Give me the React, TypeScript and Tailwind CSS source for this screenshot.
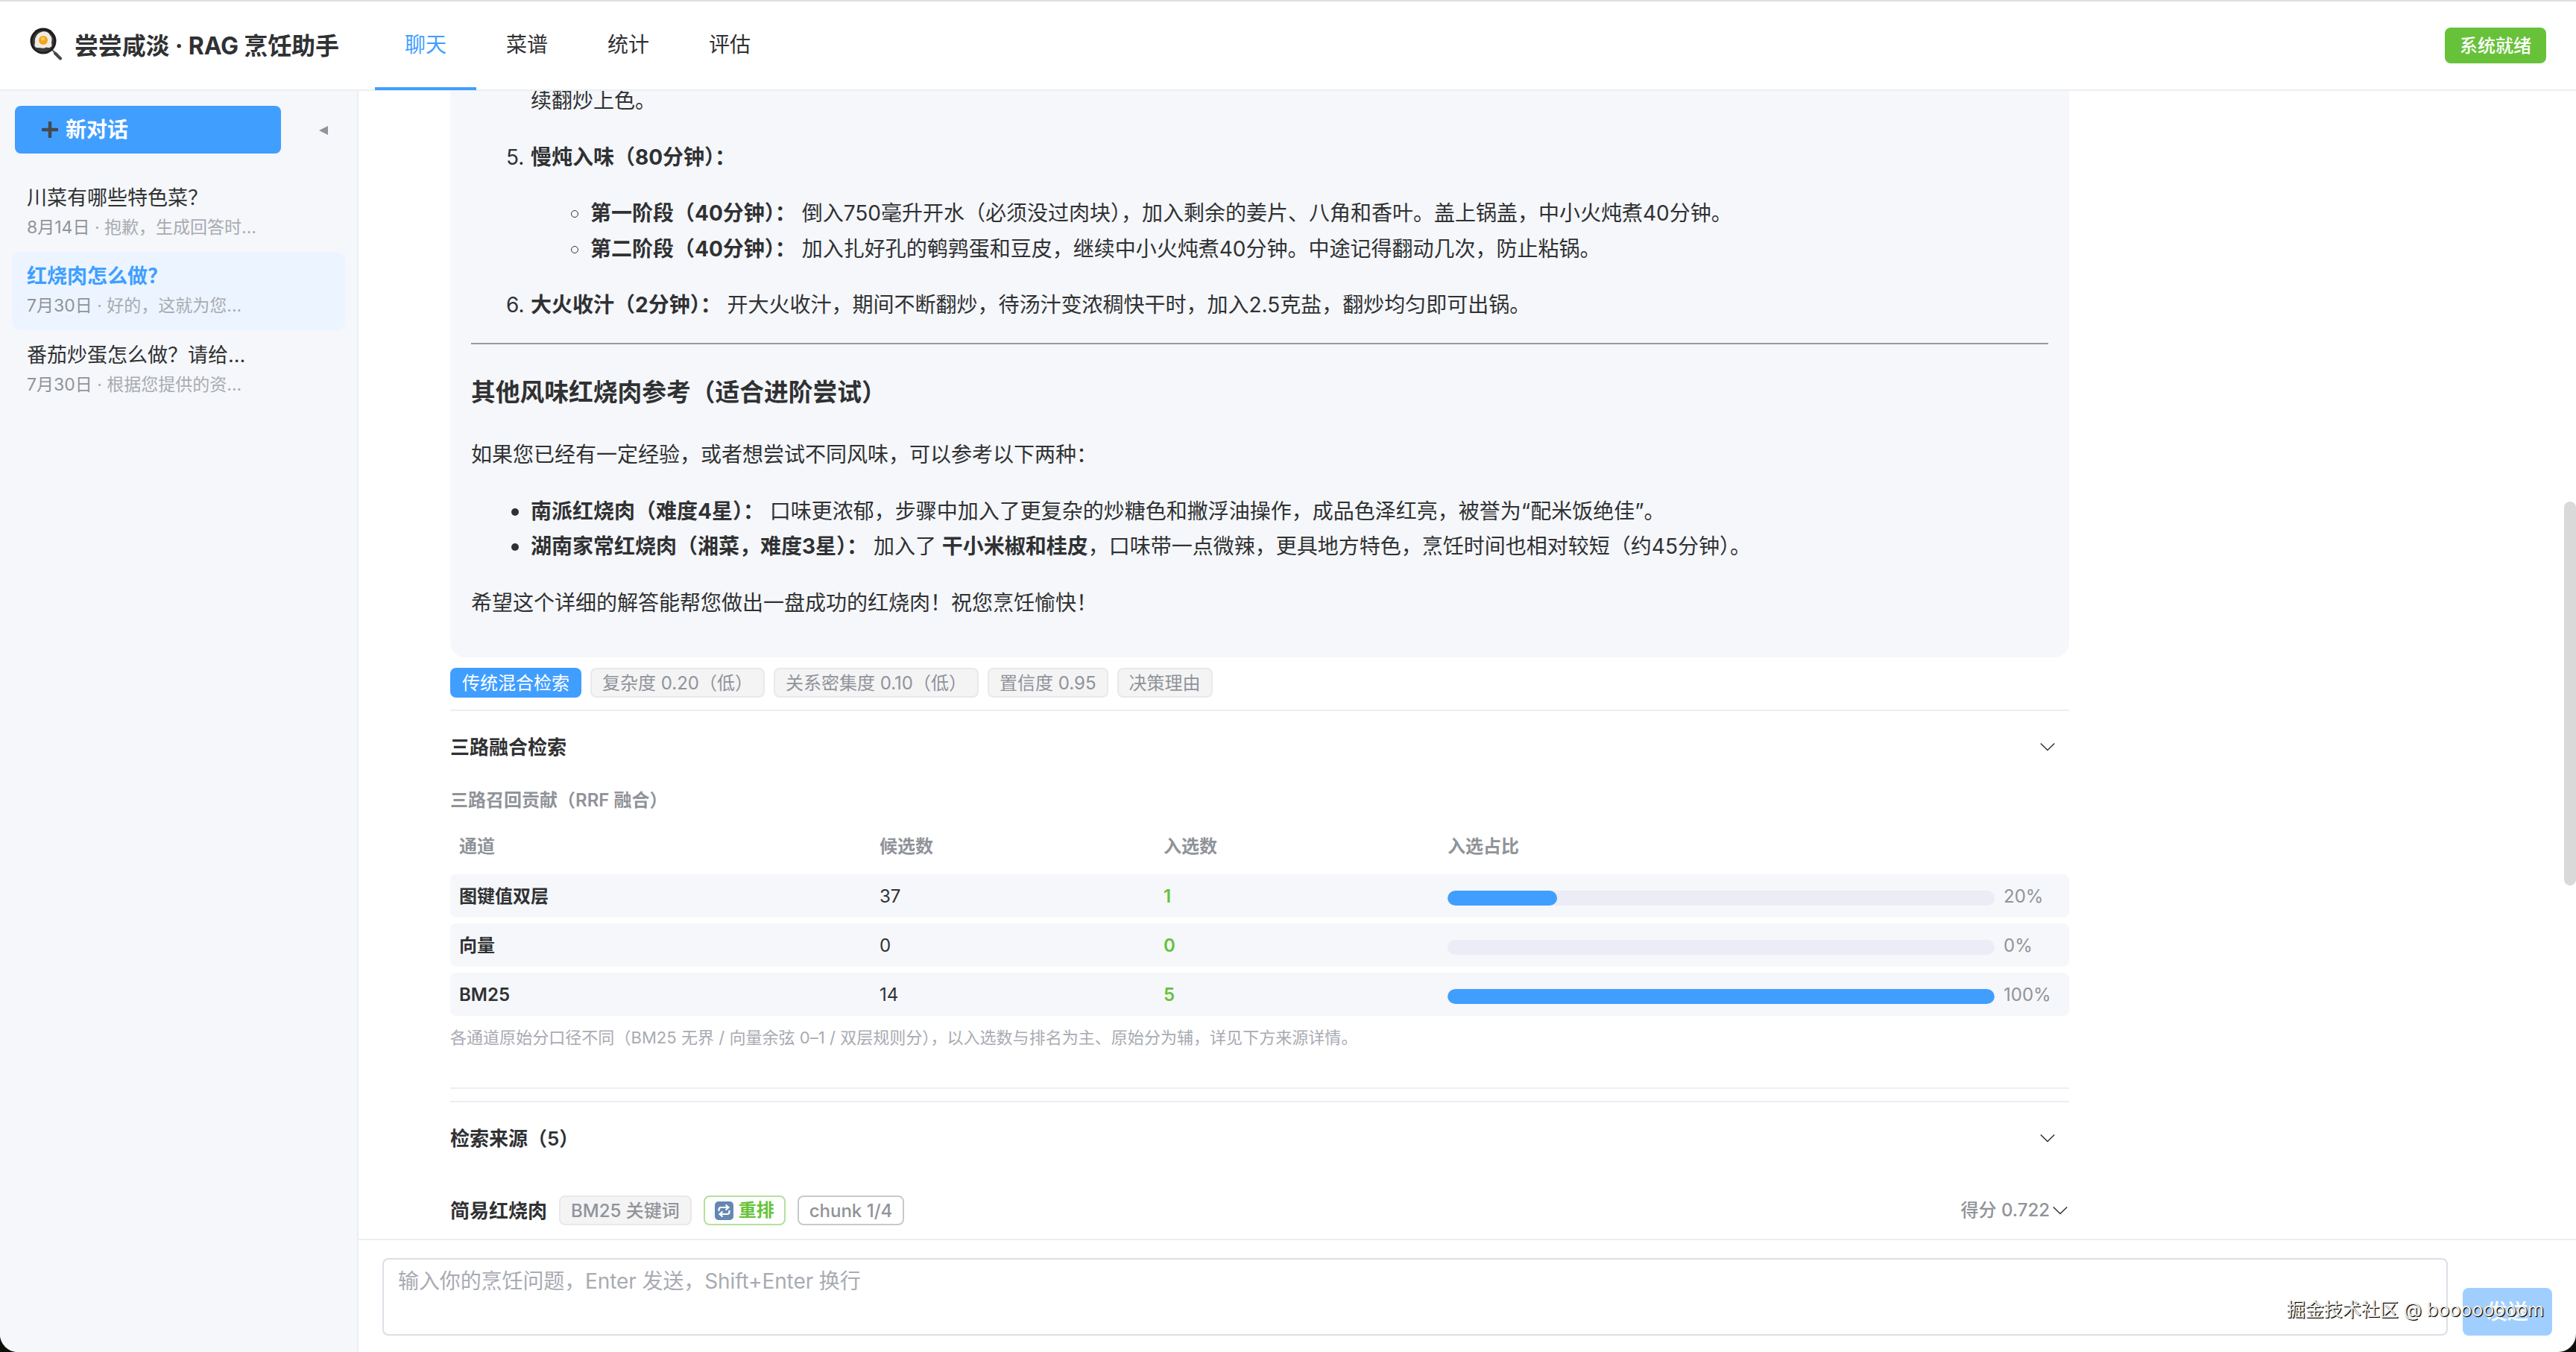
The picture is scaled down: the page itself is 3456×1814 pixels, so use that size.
import React from 'react';

interface Conversation {
    id: number;
    title: string;
    date: string;
    preview: string;
}

interface Channel {
    name: string;
    candidates: number;
    selected: number;
    percent: number;
}

const navItems = ['聊天', '菜谱', '统计', '评估'];

const conversations: Conversation[] = [
    { id: 1, title: '川菜有哪些特色菜？', date: '8月14日', preview: '抱歉，生成回答时...' },
    { id: 2, title: '红烧肉怎么做？', date: '7月30日', preview: '好的，这就为您...' },
    { id: 3, title: '番茄炒蛋怎么做？请给...', date: '7月30日', preview: '根据您提供的资...' },
];

const channels: Channel[] = [
    { name: '图键值双层', candidates: 37, selected: 1, percent: 20 },
    { name: '向量', candidates: 0, selected: 0, percent: 0 },
    { name: 'BM25', candidates: 14, selected: 5, percent: 100 },
];

const routeTags = ['复杂度 0.20（低）', '关系密集度 0.10（低）', '置信度 0.95', '决策理由'];

const PanIcon = () => (
    <svg className="-mt-[5px] h-[44px] w-[44px] shrink-0" viewBox="0 0 44 44">
        <path d="M30 30 L36 36" stroke="#77726e" strokeWidth="2.5" />
        <path d="M34 34.5 L41 41.5" stroke="#4a4644" strokeWidth="4" strokeLinecap="round" />
        <circle cx="18" cy="18" r="17.5" fill="#1d1c1c" />
        <circle cx="18" cy="18.5" r="14.5" fill="#3b3a38" />
        <path d="M13 7 C18 4 25 5 27 10 C31 14 29 18 29 21 C31 26 27 28 22 26.5 C18 29 14 26.5 10 27 C6 27 6 23 7 20 C6 15 9 9 13 7Z" fill="#f0ece4" />
        <circle cx="18" cy="17" r="6" fill="#f5a31c" />
        <circle cx="17.5" cy="15" r="2.5" fill="#fbcf45" />
    </svg>
);

const Chevron = () => (
    <svg className="h-[12px] w-[20px] shrink-0" viewBox="0 0 20 12" fill="none">
        <path d="M0.8 1.5 L10 10.5 L19.2 1.5" stroke="#303133" strokeWidth="1.5" />
    </svg>
);

const Header = () => (
    <header className="flex h-[122px] shrink-0 items-stretch border-t-2 border-b-2 border-t-[#dedede] border-b-[#ebeef2] bg-white pr-10 pl-10">
        <div className="flex w-[463px] items-center">
            <PanIcon />
            <h1 className="mt-[2px] ml-[16px] text-[32px] leading-none font-bold tracking-[-0.15px] whitespace-nowrap">尝尝咸淡 · RAG 烹饪助手</h1>
        </div>
        <nav className="-mb-px flex">
            {navItems.map((item, i) => (
                <div
                    key={item}
                    className={`flex w-[136px] items-center justify-center border-b-4 ${i === 0 ? 'border-[#409eff] text-[#409eff]' : 'border-transparent'}`}
                >
                    {item}
                </div>
            ))}
        </nav>
        <span className="mt-[35px] ml-auto flex h-12 w-[136px] items-center justify-center rounded-lg bg-[#67c23a] pt-px text-[24px] font-medium text-white">系统就绪</span>
    </header>
);

const Sidebar = () => (
    <aside className="flex w-[481px] shrink-0 flex-col border-r-2 border-[#ebeef2] bg-[#f5f7fa]">
        <div className="mt-5 flex items-center pl-5">
            <button className="flex h-16 w-[357px] items-center rounded-lg bg-[#409eff] pl-9 font-bold text-white">
                <svg className="mr-[10px] h-[22px] w-[22px]" viewBox="0 0 22 22">
                    <path d="M11 1.5V20.5M1.5 11H20.5" stroke="#45494e" strokeWidth="4.5" strokeLinecap="round" />
                </svg>
                新对话
            </button>
            <svg className="mt-[2px] ml-[51px] h-[12px] w-[12px]" viewBox="0 0 12 12">
                <path d="M12 0V12L0 6Z" fill="#909399" />
            </svg>
        </div>
        <ul className="mt-[26px] px-4">
            {conversations.map(c => (
                <li key={c.id} className={`flex h-[105.5px] flex-col justify-center rounded-xl pl-5 ${c.id === 2 ? 'bg-[#ecf5ff]' : ''}`}>
                    <div className={`pt-px text-[27px] leading-[40px] ${c.id === 2 ? 'font-semibold text-[#409eff]' : ''}`}>{c.title}</div>
                    <div className="text-[23px] leading-[39px] text-[#a8abb2]">
                        <span className="text-[#909399]">{c.date}</span> · {c.preview}
                    </div>
                </li>
            ))}
        </ul>
    </aside>
);

const Answer = () => (
    <div className="rounded-b-[20px] bg-[#f5f7fa] px-7 pb-[22px] leading-[47.6px]">
        <div className="pl-[80px]">
            <p className="-mt-[10px]">续翻炒上色。</p>
            <div className="relative mt-[28px]">
                <span className="absolute -left-[33px]">5.</span>
                <b>慢炖入味（80分钟）：</b>
            </div>
            <ul className="mt-[28px] pl-20">
                <li className="relative">
                    <i className="absolute top-[19px] -left-[26px] size-[10px] rounded-full border-[1.5px] border-[#303133]" />
                    <b>第一阶段（40分钟）：</b> 倒入750毫升开水（必须没过肉块），加入剩余的姜片、八角和香叶。盖上锅盖，中小火炖煮40分钟。
                </li>
                <li className="relative">
                    <i className="absolute top-[19px] -left-[26px] size-[10px] rounded-full border-[1.5px] border-[#303133]" />
                    <b>第二阶段（40分钟）：</b> 加入扎好孔的鹌鹑蛋和豆皮，继续中小火炖煮40分钟。中途记得翻动几次，防止粘锅。
                </li>
            </ul>
            <div className="relative mt-[28px]">
                <span className="absolute -left-[33px]">6.</span>
                <b>大火收汁（2分钟）：</b> 开大火收汁，期间不断翻炒，待汤汁变浓稠快干时，加入2.5克盐，翻炒均匀即可出锅。
            </div>
        </div>
        <hr className="mt-[26px] border-0 border-t-2 border-[#999999]" />
        <h3 className="mt-[36px] text-[32.76px] leading-[56px] font-bold">其他风味红烧肉参考（适合进阶尝试）</h3>
        <p className="mt-[33px]">如果您已经有一定经验，或者想尝试不同风味，可以参考以下两种：</p>
        <ul className="mt-[28px] pl-[80px]">
            <li className="relative">
                <i className="absolute top-[19px] -left-[26px] size-[10px] rounded-full bg-[#303133]" />
                <b>南派红烧肉（难度4星）：</b> 口味更浓郁，步骤中加入了更复杂的炒糖色和撇浮油操作，成品色泽红亮，被誉为“配米饭绝佳”。
            </li>
            <li className="relative">
                <i className="absolute top-[19px] -left-[26px] size-[10px] rounded-full bg-[#303133]" />
                <b>湖南家常红烧肉（湘菜，难度3星）：</b> 加入了 <b>干小米椒和桂皮</b>，口味带一点微辣，更具地方特色，烹饪时间也相对较短（约45分钟）。
            </li>
        </ul>
        <p className="mt-[28px] pb-[27px]">希望这个详细的解答能帮您做出一盘成功的红烧肉！祝您烹饪愉快！</p>
    </div>
);

const ChannelTable = () => (
    <div className="text-[24px]">
        <div className="grid h-[52px] grid-cols-[564px_381px_381px_1fr] items-center pt-[4px] pl-[12px] font-semibold text-[#909399]">
            <span>通道</span>
            <span>候选数</span>
            <span>入选数</span>
            <span>入选占比</span>
        </div>
        <div className="mt-[13px] flex flex-col gap-2">
            {channels.map(ch => (
                <div key={ch.name} className="grid h-[58px] grid-cols-[564px_381px_381px_1fr] items-center rounded-lg bg-[#f5f7fa] pt-[2px] pl-[12px]">
                    <span className="font-semibold">{ch.name}</span>
                    <span>{ch.candidates}</span>
                    <span className="font-semibold text-[#67c23a]">{ch.selected}</span>
                    <div className="flex items-center text-[#909399]">
                        <div className="mt-[3px] h-5 w-[734px] overflow-hidden rounded-full bg-[#ebecf5]">
                            <div className="h-full rounded-full bg-[#409eff]" style={{ width: `${ch.percent}%` }} />
                        </div>
                        <span className="ml-3">{ch.percent}%</span>
                    </div>
                </div>
            ))}
        </div>
    </div>
);

const SourceRow = () => (
    <div className="mt-[29px] flex h-10 items-center gap-4 text-[24px] font-medium text-[#909399]">
        <span className="text-[26px] font-semibold text-[#303133]">简易红烧肉</span>
        <span className="flex h-10 items-center rounded-lg border-2 border-[#e9e9eb] bg-[#f4f4f5] px-[14px] pt-px">BM25 关键词</span>
        <span className="flex h-10 items-center rounded-lg border-2 border-[#b3e19d] px-[13px] font-semibold text-[#67c23a]">
            <svg className="mr-[7px] h-[25px] w-[25px]" viewBox="0 0 25 25" fill="none">
                <rect width="25" height="25" rx="5" fill="#6488b3" />
                <path d="M5.5 13V11Q5.5 8 8.5 8H17M14.5 4.5L18.5 8L14.5 11.5M19.5 12V14Q19.5 17 16.5 17H8M10.5 13.5L6.5 17L10.5 20.5" stroke="#fff" strokeWidth="2.2" />
            </svg>
            重排
        </span>
        <span className="flex h-10 items-center rounded-lg border-2 border-[#c8c9cc] px-[14px] pt-px">chunk 1/4</span>
        <span className="mr-[2px] ml-auto flex items-center gap-1">
            得分 0.722
            <Chevron />
        </span>
    </div>
);

const App: React.FC = () => {
    return (
        <div className="h-[1814px] w-[3456px] overflow-hidden bg-[#0c0f0a]">
            <div className="relative flex h-full flex-col overflow-hidden rounded-b-[24px] bg-white font-['Inter','Noto_Sans_CJK_SC',sans-serif] text-[28px] text-[#303133]">
                <Header />
                <div className="flex min-h-0 flex-1">
                    <Sidebar />
                    <main className="flex min-w-0 flex-1 flex-col">
                        <div className="relative h-[1540px] overflow-hidden">
                            <div className="ml-[123px] w-[2172px]">
                                <Answer />
                                <div className="mt-[14px] flex gap-3 text-[24px] text-[#909399]">
                                    <span className="flex h-10 items-center rounded-lg bg-[#409eff] px-4 pt-px text-white">传统混合检索</span>
                                    {routeTags.map(tag => (
                                        <span key={tag} className="flex h-10 items-center rounded-lg border-2 border-[#e9e9eb] bg-[#f4f4f5] px-[14px] pt-px">{tag}</span>
                                    ))}
                                </div>
                                <section className="mt-4 h-[509px] border-t-2 border-b-2 border-[#ebeef2]">
                                    <div className="flex h-[96px] items-center justify-between pr-[19px] text-[26px] font-semibold">
                                        三路融合检索
                                        <Chevron />
                                    </div>
                                    <p className="h-[58px] pt-[6px] text-[24px] leading-[36px] font-semibold text-[#909399]">三路召回贡献（RRF 融合）</p>
                                    <ChannelTable />
                                    <p className="mt-[12px] text-[22px] leading-[34px] tracking-[0.04px] text-[#a8abb2]">各通道原始分口径不同（BM25 无界 / 向量余弦 0–1 / 双层规则分），以入选数与排名为主、原始分为辅，详见下方来源详情。</p>
                                </section>
                                <section className="mt-4 border-t-2 border-[#ebeef2]">
                                    <div className="flex h-[96px] items-center justify-between pr-[19px] text-[26px] font-semibold">
                                        检索来源（5）
                                        <Chevron />
                                    </div>
                                    <SourceRow />
                                </section>
                            </div>
                            <div className="absolute top-[551px] right-0 h-[515px] w-4 rounded-full bg-[#d9d9d9]" />
                        </div>
                        <div className="flex flex-1 items-start border-t-2 border-[#ebeef2] pt-6 pl-8">
                            <div className="h-[104px] w-[2771px] rounded-lg border-2 border-[#dcdfe6] px-[19px] pt-[8px] leading-[42px] tracking-[-0.1px] text-[#a8abb2]">输入你的烹饪问题，Enter 发送，Shift+Enter 换行</div>
                            <button className="mt-10 ml-5 h-16 w-[120px] rounded-lg bg-[#a0cfff] font-medium text-white">发送</button>
                        </div>
                    </main>
                </div>
                <span className="absolute right-[43px] bottom-[39px] text-[25px] leading-[36px] whitespace-nowrap text-[#eeeeee] [text-shadow:1px_1px_1px_#000,1px_1px_0_#333]">
                    掘金技术社区 @ boooooooom
                </span>
            </div>
        </div>
    );
};

export default App;
